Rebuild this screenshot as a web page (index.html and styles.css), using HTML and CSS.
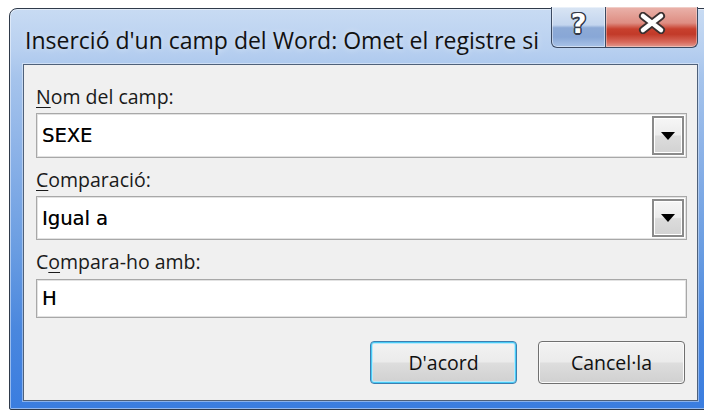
FILE: index.html
```html
<!DOCTYPE html>
<html lang="ca">
<head>
<meta charset="utf-8">
<title>Inserció d'un camp del Word</title>
<link rel="stylesheet" href="styles.css">
</head>
<body>
<div class="window">
  <div class="titlebar">
    <div class="title">Inserció d'un camp del Word: Omet el registre si</div>
    <div class="caption-buttons">
      <div class="cap-btn help"><span class="help-glyph">?</span></div>
      <div class="cap-btn close">
        <svg class="close-glyph" width="30" height="22" viewBox="0 0 30 22">
          <path d="M6 4 L24 18 M24 4 L6 18" stroke="#3a3030" stroke-width="8" stroke-linecap="round"/>
          <path d="M6 4 L24 18 M24 4 L6 18" stroke="#ffffff" stroke-width="4.5" stroke-linecap="round"/>
        </svg>
      </div>
    </div>
  </div>
  <div class="client">
    <label class="field-label"><u>N</u>om del camp:</label>
    <div class="combo">
      <span class="value">SEXE</span>
      <span class="drop"><svg width="14" height="8" viewBox="0 0 14 8"><path d="M0 0 H14 L7 8 Z" fill="#000"/></svg></span>
    </div>
    <label class="field-label gap-top"><u>C</u>omparació:</label>
    <div class="combo">
      <span class="value">Igual a</span>
      <span class="drop"><svg width="14" height="8" viewBox="0 0 14 8"><path d="M0 0 H14 L7 8 Z" fill="#000"/></svg></span>
    </div>
    <label class="field-label gap-top">C<u>o</u>mpara-ho amb:</label>
    <div class="textbox"><span class="value">H</span></div>
    <div class="actions">
      <button class="btn default">D'acord</button>
      <button class="btn">Cancel·la</button>
    </div>
  </div>
</div>
</body>
</html>
```
FILE: styles.css
```css
html, body {
  margin: 0;
  padding: 0;
  background: #ffffff;
  overflow: hidden;
  width: 704px;
  height: 410px;
}

.window {
  box-sizing: border-box;
  margin: 8px 0 0 9px;
  width: 703px;
  height: 402px;
  border: 1px solid #2f3a4a;
  border-radius: 8px 8px 2px 2px;
  padding: 0 13px 8px 13px;
  background: linear-gradient(to bottom,
    #c8dbf3 0%, #b8d0f0 10%, #a6c4ec 17%,
    #8db3e8 35%, #6a9de2 60%, #4a87de 80%, #3a7de0 100%);
  box-shadow: inset 0 0 0 1px rgba(255, 255, 255, 0.45);
  display: flex;
  flex-direction: column;
  font-family: "Open Sans", "Noto Sans", sans-serif;
  font-feature-settings: "locl" 0;
  font-variant-ligatures: none;
}

/* caption row */
.titlebar {
  height: 55px;
  display: flex;
  align-items: flex-start;
  flex-shrink: 0;
}

.title {
  padding: 17px 0 0 2px;
  font-size: 23px;
  line-height: 28px;
  color: #111;
  white-space: nowrap;
  text-shadow: 0 0 6px rgba(255, 255, 255, 0.55);
}

.caption-buttons {
  margin-left: auto;
  margin-top: -2px;
  display: flex;
}

.cap-btn {
  box-sizing: border-box;
  height: 41px;
  border: 1px solid #3b4a62;
  border-top: none;
  display: flex;
  justify-content: center;
  padding-top: 5px;
}

.help {
  width: 55px;
  border-radius: 0 0 0 6px;
  background: linear-gradient(to bottom,
    #d9e5f4 0%, #c3d5ee 45%, #8daad6 52%, #88a7d6 75%, #a9c3e8 100%);
  box-shadow: inset 0 0 0 1px rgba(255, 255, 255, 0.45);
}

.help-glyph {
  font-family: "DejaVu Sans", sans-serif;
  font-weight: bold;
  font-size: 27px;
  line-height: 28px;
  margin-top: -2px;
  color: #ffffff;
  text-shadow:
    1.5px 0 0 #333a48, -1.5px 0 0 #333a48, 0 1.5px 0 #333a48, 0 -1.5px 0 #333a48,
    1px 1px 0 #333a48, -1px -1px 0 #333a48, 1px -1px 0 #333a48, -1px 1px 0 #333a48;
}

.close {
  width: 92px;
  border-left: none;
  border-radius: 0 0 6px 0;
  background: linear-gradient(to bottom,
    #eab3ab 0%, #de8d82 40%, #c8402e 55%, #c23a29 68%, #d86a5c 88%, #e29a90 100%);
  box-shadow: inset 0 0 0 1px rgba(255, 255, 255, 0.35);
}

.close-glyph {
  display: block;
}

/* dialog body */
.client {
  flex: 1;
  box-sizing: border-box;
  background: #f0f0f0;
  border: 1px solid #4f617a;
  box-shadow: 0 0 0 1px rgba(255, 255, 255, 0.4);
  padding: 19px 10px 0 12px;
  display: flex;
  flex-direction: column;
}

.field-label {
  display: block;
  height: 26px;
  line-height: 26px;
  font-size: 19.5px;
  color: #1a1a1a;
  margin-bottom: 3px;
}

.field-label.gap-top {
  margin-top: 9px;
}

.field-label u {
  text-decoration-thickness: 1px;
  text-underline-offset: 3px;
}

.combo,
.textbox {
  box-sizing: border-box;
  background: #ffffff;
  border: 1px solid #a8a8a8;
  box-shadow: inset 0 0 0 1px #e2e2e2;
  display: flex;
  align-items: center;
  padding: 2px 2px 2px 5px;
}

.combo {
  height: 45px;
}

.combo + .field-label.gap-top + .combo {
  height: 44px;
}

.textbox {
  height: 39px;
  margin-top: 1px;
}

.value {
  flex: 1;
  font-family: "DejaVu Sans", sans-serif;
  font-size: 19.5px;
  color: #000;
  text-shadow: 0.3px 0 0 rgba(0, 0, 0, 0.6);
}

.drop {
  box-sizing: border-box;
  width: 32px;
  align-self: stretch;
  border: 2px solid #8a8a8a;
  background: linear-gradient(to bottom, #f6f6f6 0%, #ececec 48%, #dcdcdc 52%, #d2d2d2 100%);
  box-shadow: inset 0 0 0 1px #ffffff;
  display: flex;
  align-items: center;
  justify-content: center;
}

.drop svg {
  display: block;
}

.actions {
  display: flex;
  justify-content: flex-end;
  gap: 21px;
  margin-top: 23px;
  padding-right: 2px;
}

.btn {
  box-sizing: border-box;
  width: 147px;
  height: 43px;
  border: 1px solid #707070;
  border-radius: 4px;
  background: linear-gradient(to bottom, #f3f3f3 0%, #ebebeb 48%, #dddddd 52%, #d0d0d0 100%);
  box-shadow: inset 0 0 0 1px #fbfbfb;
  font-family: "Open Sans", "Noto Sans", sans-serif;
  font-feature-settings: "locl" 0;
  font-variant-ligatures: none;
  font-size: 19.5px;
  color: #111;
  padding: 0;
}

.btn.default {
  border-color: #3c7fb1;
  box-shadow: inset 0 0 0 1px #48cbf5, inset 0 0 0 2px #b9e8fb;
}
```
